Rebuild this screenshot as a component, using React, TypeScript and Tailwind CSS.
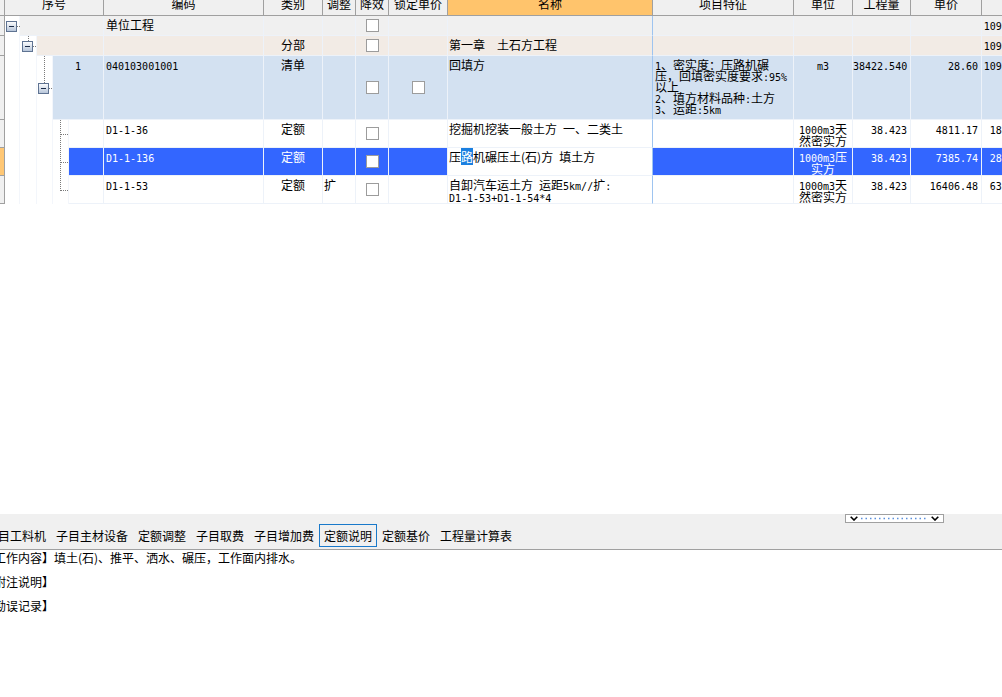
import React from 'react';

// latin runs in the grid are drawn in a narrow mono face, like the old bitmap font
const mono = '[font-family:DejaVu_Sans_Mono,Liberation_Mono,monospace] text-[10px]';

function Txt({ s }: { s: string }) {
    const parts = s.match(/[\x20-\x7e]+|[^\x20-\x7e]+/g) ?? [];
    return (
        <>
            {parts.map((p, i) =>
                /^[\x20-\x7e]+$/.test(p) ? (
                    <span key={i} className={mono}>{p}</span>
                ) : (
                    <span key={i}>{p}</span>
                )
            )}
        </>
    );
}

function MinusBox({ x, y, id }: { x: number; y: number; id: string }) {
    return (
        <g transform={`translate(${x} ${y})`}>
            <defs>
                <linearGradient id={id} x1="0" y1="0" x2="0" y2="1">
                    <stop offset="0" stopColor="#ffffff" />
                    <stop offset="1" stopColor="#b4c3d8" />
                </linearGradient>
            </defs>
            <rect x="0.5" y="0.5" width="10" height="10" fill={`url(#${id})`} stroke="#5f7392" />
            <line x1="3" x2="8" y1="5.5" y2="5.5" stroke="#1b2b48" />
        </g>
    );
}

const dot = { stroke: '#7a7a7a', strokeDasharray: '1 1', strokeWidth: 1 };

function Tree({ level, last }: { level: number; last?: boolean }) {
    if (level === 0) {
        return (
            <svg width="15" height="20" className="absolute left-0 top-0">
                <MinusBox x={1} y={5} id="mb0" />
                <line x1="12" x2="15" y1="10.5" y2="10.5" {...dot} />
            </svg>
        );
    }
    if (level === 1) {
        return (
            <svg width="32" height="20" className="absolute left-0 top-0">
                <line x1="23.5" x2="23.5" y1="0" y2="5" {...dot} />
                <MinusBox x={17} y={5} id="mb1" />
                <line x1="28" x2="32" y1="10.5" y2="10.5" {...dot} />
            </svg>
        );
    }
    if (level === 2) {
        return (
            <svg width="48" height="64" className="absolute left-0 top-0">
                <line x1="39.5" x2="39.5" y1="0" y2="27" {...dot} />
                <MinusBox x={33} y={27} id="mb2" />
                <line x1="44" x2="48" y1="32.5" y2="32.5" {...dot} />
            </svg>
        );
    }
    return (
        <svg width="64" height="28" className="absolute left-0 top-0">
            <line x1="55.5" x2="55.5" y1="0" y2={last ? 15 : 28} {...dot} />
            <line x1="56" x2="64" y1="14.5" y2="14.5" {...dot} />
        </svg>
    );
}

function Check() {
    return <div className="w-[13px] h-[13px] border border-[#9c9c9c] bg-white" />;
}

type Row = {
    level: number;
    last?: boolean;
    h: string;
    bg: string;
    selected?: boolean;
    seq?: string;
    code?: string;
    type?: string;
    adj?: string;
    eff?: boolean;
    lock?: boolean;
    name?: React.ReactNode;
    feature?: string[];
    unit?: string[];
    qty?: string;
    price?: string;
    total?: string;
};

const rows: Row[] = [
    { level: 0, h: 'h-[20px]', bg: 'bg-[#f0f0f0]', code: '单位工程', eff: true, total: '1099030.08' },
    { level: 1, h: 'h-[20px]', bg: 'bg-[#f2ebe5]', type: '分部', eff: true, name: <Txt s="第一章  土石方工程" />, total: '1099030.08' },
    {
        level: 2, h: 'h-[64px]', bg: 'bg-[#d3e1f1]', seq: '1', code: '040103001001', type: '清单', eff: true, lock: true,
        name: '回填方',
        feature: ['1、密实度：压路机碾', '压，回填密实度要求:95%', '以上', '2、填方材料品种:土方', '3、运距:5km'],
        unit: ['m3'], qty: '38422.540', price: '28.60', total: '1098884.64',
    },
    {
        level: 3, h: 'h-[28px]', bg: 'bg-white', code: 'D1-1-36', type: '定额', eff: true,
        name: <Txt s="挖掘机挖装一般土方 一、二类土" />,
        unit: ['1000m3天', '然密实方'], qty: '38.423', price: '4811.17', total: '184859.58',
    },
    {
        level: 3, h: 'h-[28px]', bg: 'bg-[#3366ff]', selected: true, code: 'D1-1-136', type: '定额', eff: true,
        name: (
            <>
                压<span className="bg-[#1a7fe0] text-white">路</span>机碾压土(石)方<span className={mono}> </span>填土方
            </>
        ),
        unit: ['1000m3压', '实方'], qty: '38.423', price: '7385.74', total: '283784.33',
    },
    {
        level: 3, last: true, h: 'h-[28px]', bg: 'bg-white', code: 'D1-1-53', type: '定额', adj: '扩', eff: true,
        name: (
            <div className="pt-[1px]">
                <div className="h-[12px] leading-[12px] whitespace-nowrap"><Txt s="自卸汽车运土方 运距5km//扩:" /></div>
                <div className="h-[12px] leading-[12px] whitespace-nowrap"><Txt s="D1-1-53+D1-1-54*4" /></div>
            </div>
        ),
        unit: ['1000m3天', '然密实方'], qty: '38.423', price: '16406.48', total: '630386.19',
    },
];

const indentW = ['w-[15px]', 'w-[32px]', 'w-[48px]', 'w-[64px]'];
const seqW = ['w-[84px]', 'w-[67px]', 'w-[51px]', 'w-[35px]'];
const levelCells = ['w-[15px]', 'w-[17px]', 'w-[16px]', 'w-[16px]'];

const cell = 'shrink-0 border-r border-b border-[#edf2f9] overflow-hidden';

function GridRow({ r }: { r: Row }) {
    const txt = 'pt-[2px] leading-[14px]';
    return (
        <div className={`flex ${r.h}`}>
            <div className={`w-[5px] shrink-0 border-r border-b border-[#a0a0a0] ${r.selected ? 'bg-[#ffc774]' : 'bg-[#f0f0f0]'}`} />
            <div className={`relative shrink-0 flex ${indentW[r.level]}`}>
                {levelCells.slice(0, r.level + 1).map((w, i) => (
                    <div key={i} className={`${w} h-full shrink-0 border-r border-[#f3f6fb]`} />
                ))}
                <Tree level={r.level} last={r.last} />
            </div>
            <div className={`flex ${r.bg} ${r.selected ? 'text-white' : ''}`}>
                <div className={`${cell} ${seqW[r.level]} text-center ${txt}`}>{r.seq && <Txt s={r.seq} />}</div>
                <div className={`${cell} w-[160px] pl-[2px] ${txt}`}>{r.code && <Txt s={r.code} />}</div>
                <div className={`${cell} w-[59px] text-center ${txt}`}>{r.type}</div>
                <div className={`${cell} w-[33px] pl-[1px] ${txt}`}>{r.adj}</div>
                <div className={`${cell} w-[33px] flex items-center justify-center`}>{r.eff && <Check />}</div>
                <div className={`${cell} w-[59px] flex items-center justify-center`}>{r.lock && <Check />}</div>
                <div className={`${cell} w-[205px] pl-[1px] whitespace-pre-wrap border-r-[#9ec4f0] ${r.selected ? 'bg-white text-black' : ''} ${txt}`}>
                    {r.name}
                </div>
                <div className={`${cell} w-[141px] pl-[2px] pt-[3px]`}>
                    {r.feature?.map((l, i) => (
                        <div key={i} className="h-[11px] leading-[12px] whitespace-nowrap"><Txt s={l} /></div>
                    ))}
                </div>
                <div className={`${cell} w-[59px] text-center pt-[3px]`}>
                    {r.unit?.map((l, i) => (
                        <div key={i} className="h-[12px] leading-[12px] whitespace-nowrap"><Txt s={l} /></div>
                    ))}
                </div>
                <div className={`${cell} w-[58px] text-right pr-[3px] ${txt}`}>{r.qty && <Txt s={r.qty} />}</div>
                <div className={`${cell} w-[71px] text-right pr-[3px] ${txt}`}>{r.price && <Txt s={r.price} />}</div>
                <div className={`${cell} w-[66px] text-right pr-[3px] ${txt}`}>{r.total && <Txt s={r.total} />}</div>
            </div>
        </div>
    );
}

const headers: [string, string][] = [
    ['w-[5px]', ''],
    ['w-[99px]', '序号'],
    ['w-[160px]', '编码'],
    ['w-[59px]', '类别'],
    ['w-[33px]', '调整'],
    ['w-[33px]', '降效'],
    ['w-[59px]', '锁定单价'],
    ['w-[205px]', '名称'],
    ['w-[141px]', '项目特征'],
    ['w-[59px]', '单位'],
    ['w-[58px]', '工程量'],
    ['w-[71px]', '单价'],
    ['w-[66px]', ''],
];

const tabs = ['子目工料机', '子目主材设备', '定额调整', '子目取费', '子目增加费', '定额说明', '定额基价', '工程量计算表'];

function Chevron() {
    return (
        <svg width="8" height="5" className="shrink-0">
            <path d="M0.7 0.7 L4 4 L7.3 0.7" fill="none" stroke="#000" strokeWidth="1.6" />
        </svg>
    );
}

export default function App() {
    return (
        <div className="w-[1002px] h-[697px] flex flex-col overflow-hidden bg-white text-black text-[12px] [font-family:Noto_Sans_CJK_SC,sans-serif]">
            {/* grid */}
            <div className="h-[514px] shrink-0 overflow-hidden">
                <div className="w-[1102px]">
                    <div className="flex h-[16px] bg-[#f0f0f0] border-b border-[#a0a0a0]">
                        {headers.map(([w, t], i) => (
                            <div
                                key={i}
                                className={`${w} shrink-0 h-full flex justify-center border-r border-[#a0a0a0] overflow-hidden ${t === '名称' ? 'bg-[#ffc46c]' : ''}`}
                            >
                                <span className="-mt-[2px] leading-[12px] whitespace-nowrap">{t}</span>
                            </div>
                        ))}
                    </div>
                    {rows.map((r, i) => (
                        <GridRow key={i} r={r} />
                    ))}
                </div>
            </div>

            {/* tab strip */}
            <div className="h-[36px] shrink-0 bg-[#f0f0f0] border-b border-[#a0a0a0] flex flex-col">
                <div className="h-[9px] flex">
                    <div className="ml-[845px] w-[99px] h-[9px] border border-[#a0a0a0] bg-white flex items-center px-[4px]">
                        <Chevron />
                        <svg className="flex-1 mx-[3px]" height="3">
                            <line x1="0" x2="100%" y1="1.5" y2="1.5" stroke="#5b8fdc" strokeWidth="1.5" strokeDasharray="1.5 3" />
                        </svg>
                        <Chevron />
                    </div>
                </div>
                <div className="h-[23px] mt-[1px] flex -ml-[19px]">
                    {tabs.map((t) => (
                        <div
                            key={t}
                            className={`px-[4px] border flex items-center leading-[14px] whitespace-nowrap ${t === '定额说明' ? 'border-[#1979ca]' : 'border-transparent'}`}
                        >
                            {t}
                        </div>
                    ))}
                </div>
            </div>

            {/* notes */}
            <div className="flex-1 flex flex-col gap-[10px] pt-[1px] -ml-[18px] leading-[14px]">
                <div className="whitespace-nowrap">【工作内容】填土(石)、推平、洒水、碾压，工作面内排水。</div>
                <div className="whitespace-nowrap">【附注说明】</div>
                <div className="whitespace-nowrap">【勘误记录】</div>
            </div>
        </div>
    );
}
